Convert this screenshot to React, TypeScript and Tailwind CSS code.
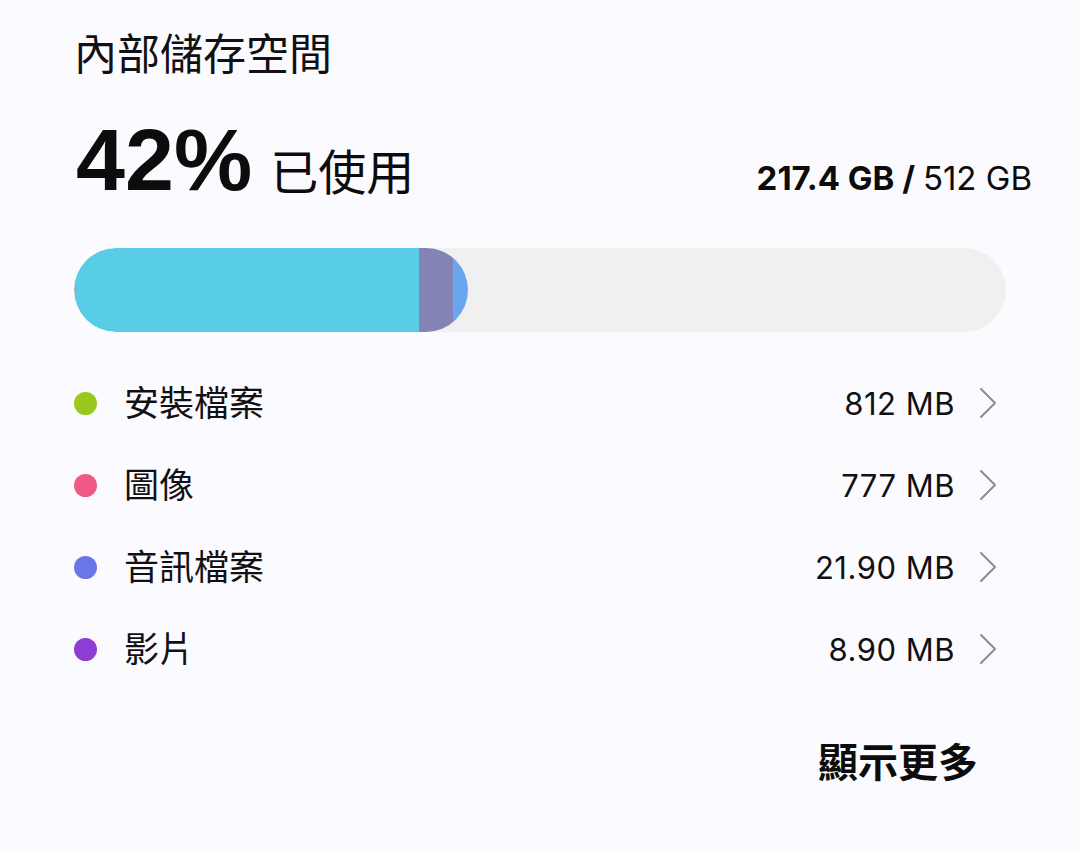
import React from "react";

const CJK = '"Inter", "Noto Sans CJK TC", sans-serif';

function Chevron() {
  return (
    <svg width="18" height="32" viewBox="0 0 18 32" fill="none" className="shrink-0">
      <path d="M2 2 L16 16 L2 30" stroke="#8c8c8c" strokeWidth="2" strokeLinecap="round" strokeLinejoin="round" />
    </svg>
  );
}

const rows = [
  { label: "安裝檔案", value: "812 MB", dot: "bg-[#9bc81e]" },
  { label: "圖像", value: "777 MB", dot: "bg-[#ee5a85]" },
  { label: "音訊檔案", value: "21.90 MB", dot: "bg-[#6977e6]" },
  { label: "影片", value: "8.90 MB", dot: "bg-[#8b3dd4]" },
];

export default function App() {
  return (
    <div className="w-[1080px] h-[850px] bg-[#fbfaff] text-[#0c0c0c] pl-[74px] overflow-hidden" style={{ fontFamily: CJK }}>
      <div className="pt-[33px] text-[43px] leading-[43px] text-[#111]">內部儲存空間</div>
      <div className="mt-[40px] flex items-baseline pl-[2px] w-[958px] h-[88px]">
        <span className="text-[88px] leading-[88px] font-bold" style={{ fontFamily: '"Liberation Sans", sans-serif' }}>42%</span>
        <span className="ml-[18px] text-[48px] leading-[48px]">已使用</span>
        <span className="ml-auto text-[33px] leading-[33px]">
          <span className="font-bold">217.4 GB / </span>
          <span>512 GB</span>
        </span>
      </div>
      <div className="mt-[44px] w-[932px] h-[84px] rounded-full bg-[#f0f0f0] overflow-hidden">
        <div className="h-full w-[394px] rounded-full overflow-hidden flex">
          <div className="h-full w-[2px] bg-[#b0aa8a]" />
          <div className="h-full w-[343px] bg-[#58cde5]" />
          <div className="h-full w-[34px] bg-[#8383b5]" />
          <div className="h-full flex-1 bg-[#6aa6ee]" />
        </div>
      </div>
      <div className="mt-[30px] w-[923px]">
        {rows.map((r) => (
          <div key={r.label} className="h-[82px] flex items-center">
            <div className={`w-[23px] h-[23px] rounded-full ${r.dot}`} />
            <div className="ml-[27px] text-[35px] leading-[35px] text-[#111]">{r.label}</div>
            <div className="ml-auto text-[31px] leading-[31px] tracking-[0.5px] text-[#111]">{r.value}</div>
            <div className="ml-[24px]">
              <Chevron />
            </div>
          </div>
        ))}
      </div>
      <div className="mt-[53px] w-[904px] flex justify-end">
        <span className="text-[40px] leading-[40px] font-bold">顯示更多</span>
      </div>
    </div>
  );
}
